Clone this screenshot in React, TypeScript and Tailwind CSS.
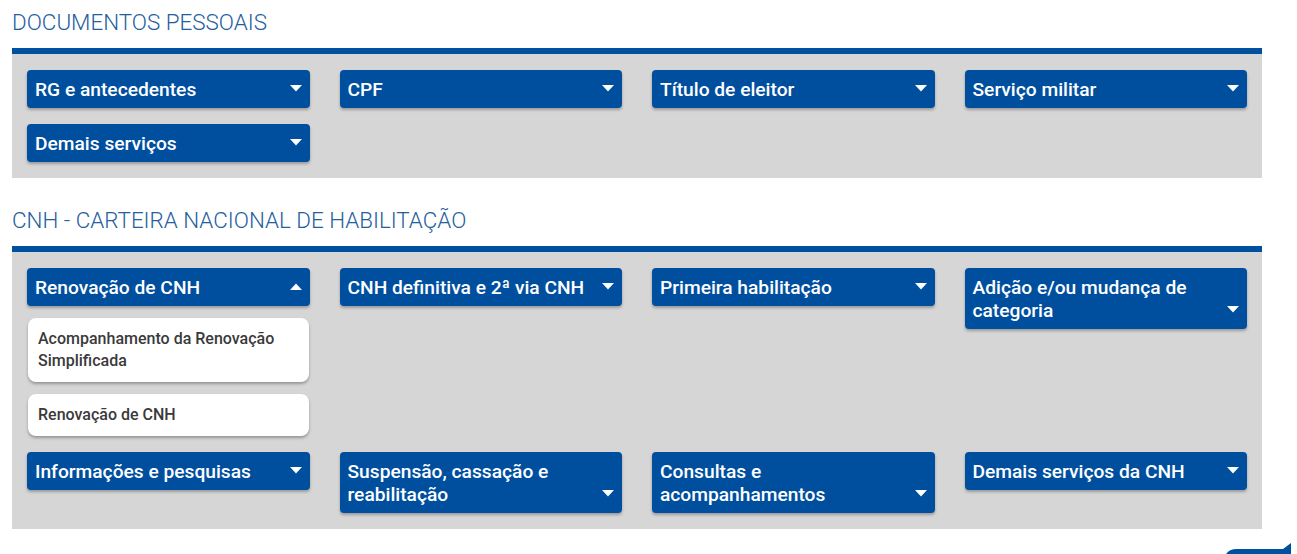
import type { ReactNode } from "react";

type Item = {
  label: string;
  open?: boolean;
  children?: string[];
};

const documentos: Item[] = [
  { label: "RG e antecedentes" },
  { label: "CPF" },
  { label: "Título de eleitor" },
  { label: "Serviço militar" },
  { label: "Demais serviços" },
];

const cnh: Item[] = [
  {
    label: "Renovação de CNH",
    open: true,
    children: ["Acompanhamento da Renovação Simplificada", "Renovação de CNH"],
  },
  { label: "CNH definitiva e 2ª via CNH" },
  { label: "Primeira habilitação" },
  { label: "Adição e/ou mudança de categoria" },
  { label: "Informações e pesquisas" },
  { label: "Suspensão, cassação e reabilitação" },
  { label: "Consultas e acompanhamentos" },
  { label: "Demais serviços da CNH" },
];

function Caret({ up }: { up?: boolean }) {
  return (
    <svg
      width="12"
      height="7"
      viewBox="0 0 12 7"
      className="absolute right-[8px] bottom-[16px]"
    >
      {up ? (
        <path d="M0 7 L6 0.5 L12 7 Z" fill="#ffffff" />
      ) : (
        <path d="M0 0 L12 0 L6 6.5 Z" fill="#ffffff" />
      )}
    </svg>
  );
}

function Accordion({ item }: { item: Item }) {
  return (
    <div className="flex flex-col">
      <button
        type="button"
        className="relative min-h-[38px] rounded-[4px] bg-[#004f9f] py-[7.5px] pl-2 pr-[34px] text-left text-[19.2px] leading-[23px] font-medium text-white shadow-[0_2px_3px_rgba(0,0,0,0.28)]"
      >
        {item.label}
        <Caret up={item.open} />
      </button>
      {item.open && item.children && (
        <div className="mt-3 flex flex-col gap-3 px-px">
          {item.children.map((child) => (
            <a
              key={child}
              href="#"
              className="block rounded-[8px] bg-white py-[10px] pl-[10px] pr-6 text-[16px] leading-[22px] font-medium text-[#3a3a3a] shadow-[0_2px_3px_rgba(0,0,0,0.3)]"
            >
              {child}
            </a>
          ))}
        </div>
      )}
    </div>
  );
}

function Section({ title, children }: { title: string; children: ReactNode }) {
  return (
    <section>
      <h2 className="h-12 pt-[10px] text-[22.4px] leading-6 font-light text-[#25609e]">
        {title}
      </h2>
      <div className="border-t-[6px] border-[#0050a0] bg-[#d6d6d6] px-[15px] py-4">
        <div className="grid grid-cols-4 items-start gap-x-[30px] gap-y-4">
          {children}
        </div>
      </div>
    </section>
  );
}

export default function App() {
  return (
    <div
      className="relative h-[554px] w-[1297px] overflow-hidden bg-white"
      style={{ fontFamily: "Roboto, 'Liberation Sans', sans-serif" }}
    >
      <div className="ml-3 flex w-[1250px] flex-col gap-5">
        <Section title="DOCUMENTOS PESSOAIS">
          {documentos.map((item) => (
            <Accordion key={item.label} item={item} />
          ))}
        </Section>
        <Section title="CNH - CARTEIRA NACIONAL DE HABILITAÇÃO">
          {cnh.map((item) => (
            <Accordion key={item.label} item={item} />
          ))}
        </Section>
      </div>
      <svg
        width="72"
        height="14"
        viewBox="0 0 72 14"
        className="absolute left-[1225px] top-[543px]"
      >
        <path d="M0 14 Q2 6 12 6 L58 6 L66 0 L66 14 Z" fill="#0050a0" />
      </svg>
    </div>
  );
}
